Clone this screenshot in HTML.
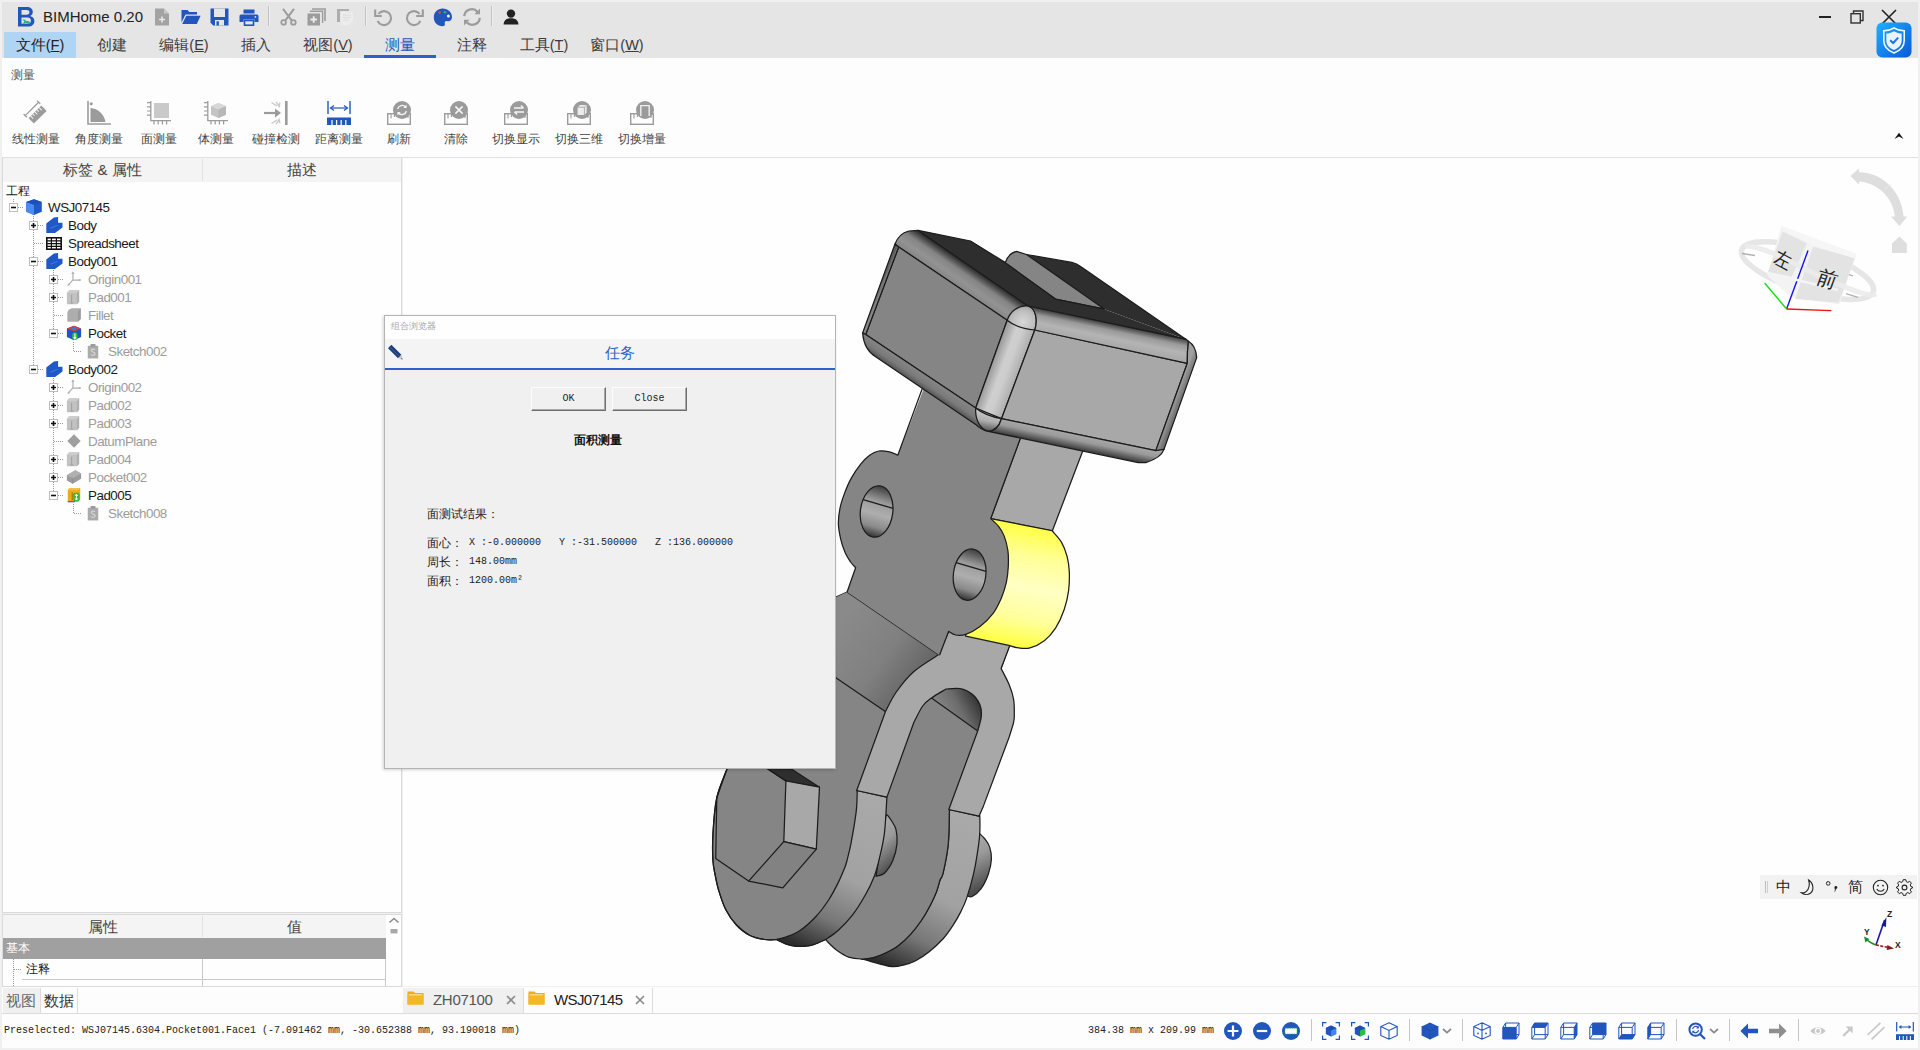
<!DOCTYPE html>
<html lang="zh">
<head>
<meta charset="utf-8">
<title>BIMHome 0.20</title>
<style>
*{box-sizing:border-box;margin:0;padding:0}
html,body{width:1920px;height:1050px;overflow:hidden;background:#f0f0f0;font-family:"Liberation Sans",sans-serif;color:#1a1a1a}
.abs{position:absolute}
svg{display:block;overflow:visible}
#titlebar{left:2px;top:2px;width:1916px;height:56px;background:#e5e5e5}
#apptitle{left:43px;top:8px;font-size:15px;line-height:18px;color:#222;white-space:nowrap}
.menu{top:32px;height:26px;line-height:26px;font-size:14.5px;color:#3a3a3a;text-align:center;white-space:nowrap}
#ribbon{left:2px;top:58px;width:1916px;height:100px;background:#fdfdfd;border-bottom:1px solid #e0e0e0}
.rlabel{top:131px;font-size:12px;line-height:16px;color:#444;white-space:nowrap;text-align:center;width:70px}
#leftpanel{left:2px;top:158px;width:400px;height:755px;background:#fefefe;border:1px solid #dadada;border-top:none}
#lphead{left:3px;top:158px;width:398px;height:24px;background:#f4f4f4}
.hdr{font-size:15px;color:#444;text-align:center;line-height:24px;height:24px;white-space:nowrap}
.tree{font-size:13.4px;letter-spacing:-0.5px;white-space:nowrap;line-height:18px;height:18px;color:#1a1a1a}
.g{color:#9c9c9c}
#view3d{left:403px;top:158px;width:1515px;height:828px;background:#fefefe}
#proppanel{left:2px;top:914px;width:400px;height:73px;background:#fefefe;border:1px solid #dadada}
#tabbar{left:2px;top:987px;width:1916px;height:27px;background:#fdfdfd;border-bottom:1px solid #dcdcdc}
#statusbar{left:2px;top:1014px;width:1916px;height:34px;background:#fdfdfd}
.mono{font-family:"Liberation Mono",monospace}
</style>
</head>
<body>
<!-- ===== title bar ===== -->
<div class="abs" id="titlebar"></div>
<svg class="abs" style="left:18px;top:7px" width="17" height="20" viewBox="0 0 17 20">
  <path d="M0 0 H9 C13.5 0 14.8 2.8 14.8 4.8 C14.8 7 13.7 8.4 12.1 9 C14.8 9.6 16.4 11.4 16.4 14 C16.4 17.4 14 19.6 10 19.6 H0 Z M3.5 2.9 V7.7 H8.6 C10.6 7.7 11.4 6.6 11.4 5.2 C11.4 3.8 10.6 2.9 8.6 2.9 Z M3.5 10.5 V16.7 H9.6 C12 16.7 12.9 15.4 12.9 13.7 C12.9 12 12 10.5 9.6 10.5 Z" fill="#2156bd" fill-rule="evenodd"/>
  <path d="M4.6 13 c1.2 -0.8 2.6 -0.4 3.2 0.8 l3.4 0.4 l1 1.6 l-1.4 1 l-3.6 -0.6 c-0.8 0.8 -2.2 0.8 -3 -0.2 l1.8 -0.4 l0.2 -1.4 z" fill="#2fae8c"/>
</svg>
<div class="abs" id="apptitle">BIMHome 0.20</div>

<!-- new doc -->
<svg class="abs" style="left:154px;top:8px" width="16" height="18" viewBox="0 0 16 18"><path d="M1 0.5 H10 L15 5.5 V17.5 H1 Z" fill="#a3a3a3"/><path d="M10 0.5 V5.5 H15 Z" fill="#c9c9c9"/><path d="M8 8.5 V14.5 M5 11.5 H11" stroke="#e8e8e8" stroke-width="1.6"/></svg>
<!-- open -->
<svg class="abs" style="left:181px;top:9px" width="20" height="16" viewBox="0 0 20 16"><path d="M0.5 1 H6.5 L8.3 3 H16 V5.5 H4.5 L0.5 13.5 Z" fill="#2156bd"/><path d="M5.3 6.8 H19.6 L15.8 15 H1.2 Z" fill="#2156bd"/></svg>
<!-- save -->
<svg class="abs" style="left:210px;top:8px" width="19" height="18" viewBox="0 0 19 18"><path d="M0.5 0.5 H18.5 V17.5 H3.2 L0.5 14.8 Z" fill="#2156bd"/><rect x="4" y="0.5" width="11" height="8.5" fill="#e5e5e5"/><rect x="5" y="12" width="9" height="5.5" fill="#e5e5e5"/><rect x="6.5" y="13.3" width="2.4" height="4.2" fill="#2156bd"/></svg>
<!-- print -->
<svg class="abs" style="left:239px;top:9px" width="20" height="17" viewBox="0 0 20 17"><rect x="4.5" y="0.5" width="11" height="4" fill="#2156bd"/><path d="M2 5.5 H18 Q19.5 5.5 19.5 7 V13 H15.5 V10.5 H4.5 V13 H0.5 V7 Q0.5 5.5 2 5.5 Z" fill="#2156bd"/><rect x="5.5" y="11.5" width="9" height="4.7" fill="none" stroke="#2156bd" stroke-width="1.6"/><circle cx="16.4" cy="7.9" r="0.9" fill="#e5e5e5"/></svg>
<div class="abs" style="left:268px;top:6px;width:2px;height:20px;background:linear-gradient(90deg,#c2c2c2 50%,#efefef 50%)"></div>
<!-- cut -->
<svg class="abs" style="left:280px;top:8px" width="17" height="18" viewBox="0 0 17 18"><path d="M3 0.8 L11.8 12.6 M14 0.8 L5.2 12.6" stroke="#9c9c9c" stroke-width="2" fill="none"/><circle cx="3.6" cy="14.4" r="2.3" fill="none" stroke="#9c9c9c" stroke-width="1.8"/><circle cx="13.4" cy="14.4" r="2.3" fill="none" stroke="#9c9c9c" stroke-width="1.8"/></svg>
<!-- copy -->
<svg class="abs" style="left:307px;top:8px" width="19" height="18" viewBox="0 0 19 18"><path d="M5 1 H18 V13" fill="none" stroke="#9c9c9c" stroke-width="1.6"/><path d="M3 3.2 H15.6 V15" fill="none" stroke="#9c9c9c" stroke-width="1.4"/><rect x="0.5" y="5.5" width="12.5" height="12" fill="#9c9c9c"/><path d="M6.7 8.2 V14.8 M3.4 11.5 H10" stroke="#ededed" stroke-width="1.8"/></svg>
<!-- paste -->
<svg class="abs" style="left:336px;top:8px" width="19" height="18" viewBox="0 0 19 18"><path d="M1 1 H13 V3 H4 V14 H1 Z" fill="#aeaeae"/><path d="M5 4 H17 V13 L13 17 H5 Z" fill="#ececec"/><path d="M7 7 H15 M7 9.5 H15 M7 12 H13" stroke="#dcdcdc" stroke-width="1"/></svg>
<div class="abs" style="left:365px;top:6px;width:2px;height:20px;background:linear-gradient(90deg,#c2c2c2 50%,#efefef 50%)"></div>
<!-- undo -->
<svg class="abs" style="left:374px;top:8px" width="20" height="18" viewBox="0 0 20 18"><path d="M4.4 6 A7 7 0 1 1 3.6 12.8" fill="none" stroke="#9c9c9c" stroke-width="2.1"/><path d="M1.2 1.4 V8 H7.8" fill="none" stroke="#9c9c9c" stroke-width="2.1"/></svg>
<!-- redo -->
<svg class="abs" style="left:404px;top:8px" width="20" height="18" viewBox="0 0 20 18"><path d="M15.6 6 A7 7 0 1 0 16.4 12.8" fill="none" stroke="#9c9c9c" stroke-width="2.1"/><path d="M18.8 1.4 V8 H12.2" fill="none" stroke="#9c9c9c" stroke-width="2.1"/></svg>
<!-- palette -->
<svg class="abs" style="left:433px;top:8px" width="20" height="19" viewBox="0 0 20 19"><path d="M9.6 0.6 C15 0.6 19 4.4 19 9 C19 12.4 16.6 13.6 14.4 13.2 C12.4 12.8 11.4 13.8 11.8 15.4 C12.2 17.2 11.4 18.2 9.6 18.2 C4.6 18.2 0.8 14.2 0.8 9.4 C0.8 4.4 4.6 0.6 9.6 0.6 Z" fill="#2156bd"/><circle cx="6.6" cy="4.6" r="1.3" fill="#d84a3a"/><circle cx="12" cy="4.2" r="1.3" fill="#3cb44b"/><circle cx="15.4" cy="8" r="1.5" fill="#f2f2f2"/></svg>
<!-- refresh -->
<svg class="abs" style="left:462px;top:8px" width="20" height="18" viewBox="0 0 20 18"><path d="M2.2 8.2 A7.6 7.6 0 0 1 15.6 4" fill="none" stroke="#9c9c9c" stroke-width="2.2"/><path d="M17.8 9.8 A7.6 7.6 0 0 1 4.4 14" fill="none" stroke="#9c9c9c" stroke-width="2.2"/><path d="M18 0.6 V6.2 H12.4 Z" fill="#9c9c9c"/><path d="M2 17.4 V11.8 H7.6 Z" fill="#9c9c9c"/></svg>
<div class="abs" style="left:491px;top:6px;width:2px;height:20px;background:linear-gradient(90deg,#c2c2c2 50%,#efefef 50%)"></div>
<!-- user -->
<svg class="abs" style="left:503px;top:9px" width="16" height="16" viewBox="0 0 16 16"><circle cx="8" cy="4.6" r="4.2" fill="#222"/><path d="M0.6 15.6 C0.6 11.2 3.6 9.2 8 9.2 C12.4 9.2 15.4 11.2 15.4 15.6 Z" fill="#222"/></svg>

<!-- window controls -->
<div class="abs" style="left:1819px;top:16px;width:12px;height:2px;background:#222"></div>
<svg class="abs" style="left:1850px;top:10px" width="14" height="14" viewBox="0 0 14 14"><path d="M3.5 3.5 V1 H13 V10.5 H10.5" fill="none" stroke="#333" stroke-width="1.4"/><rect x="1" y="3.7" width="9.3" height="9.3" fill="none" stroke="#333" stroke-width="1.4"/></svg>
<svg class="abs" style="left:1881px;top:9px" width="16" height="16" viewBox="0 0 16 16"><path d="M1 1 L15 15 M15 1 L1 15" stroke="#222" stroke-width="1.6"/></svg>
<!-- shield badge -->
<svg class="abs" style="left:1876px;top:21.5px" width="36" height="36" viewBox="0 0 37 37">
  <defs><linearGradient id="shg" x1="0" y1="0" x2="1" y2="1"><stop offset="0" stop-color="#1fb0ff"/><stop offset="1" stop-color="#0a58d8"/></linearGradient></defs>
  <rect x="0.5" y="0.5" width="36" height="36" rx="6" fill="url(#shg)"/>
  <path d="M18.5 6 C22 8.4 25.6 9 29 9 V19 C29 25.4 24.4 29.6 18.5 31.8 C12.6 29.6 8 25.4 8 19 V9 C11.4 9 15 8.4 18.5 6 Z" fill="none" stroke="#f2f8ff" stroke-width="1.6"/>
  <path d="M18.5 9.4 C21.4 11.2 24 11.6 26.4 11.8 V19 C26.4 23.8 22.8 27.2 18.5 28.8 C14.2 27.2 10.6 23.8 10.6 19 V11.8 C13 11.6 15.6 11.2 18.5 9.4 Z" fill="#e9f3ff"/>
  <path d="M14.6 18.8 L17.6 21.6 L22.8 16" fill="none" stroke="#1a72e8" stroke-width="2"/>
</svg>

<!-- ===== menu bar ===== -->
<div class="abs menu" style="left:4px;width:72px;background:#b0d4f3;color:#222">文件(<u>F</u>)</div>
<div class="abs menu" style="left:76px;width:72px">创建</div>
<div class="abs menu" style="left:148px;width:72px">编辑(<u>E</u>)</div>
<div class="abs menu" style="left:220px;width:72px">插入</div>
<div class="abs menu" style="left:292px;width:72px">视图(<u>V</u>)</div>
<div class="abs menu" style="left:364px;width:72px;color:#2156bd">测量</div>
<div class="abs" style="left:364px;top:55px;width:72px;height:3px;background:#2a62c8"></div>
<div class="abs menu" style="left:436px;width:72px">注释</div>
<div class="abs menu" style="left:508px;width:72px">工具(<u>T</u>)</div>
<div class="abs menu" style="left:581px;width:72px">窗口(<u>W</u>)</div>
<!-- ===== ribbon ===== -->
<div class="abs" id="ribbon"></div>
<div class="abs" style="left:11px;top:67px;font-size:12px;color:#555;line-height:16px">测量</div>

<!-- 线性测量 -->
<svg class="abs" style="left:24px;top:101px" width="24" height="24" viewBox="0 0 24 24"><g transform="rotate(-45 12 12)"><path d="M2.5 4 V8.5 M21.5 4 V8.5 M2.5 6.2 H21.5" stroke="#9b9b9b" stroke-width="1.3" fill="none"/><rect x="3" y="10.5" width="18" height="7.5" fill="#9b9b9b"/><path d="M6 10.5 V14 M9 10.5 V13 M12 10.5 V14 M15 10.5 V13 M18 10.5 V14" stroke="#f4f4f4" stroke-width="1"/></g></svg>
<!-- 角度测量 -->
<svg class="abs" style="left:87px;top:101px" width="24" height="24" viewBox="0 0 24 24"><path d="M1 0 V23 H24" fill="none" stroke="#9b9b9b" stroke-width="1.6"/><path d="M3.5 21 V7 C11 7.5 17 13 18.5 21 Z" fill="#9b9b9b"/><circle cx="4.2" cy="2.8" r="1.5" fill="#9b9b9b"/></svg>
<!-- 面测量 -->
<svg class="abs" style="left:147px;top:101px" width="24" height="24" viewBox="0 0 24 24"><path d="M3.8 0 V19.6 H24" fill="none" stroke="#9b9b9b" stroke-width="1.3"/><path d="M0 1.6 H3.8 M0 5.8 H3.8 M0 10 H3.8 M0 14.2 H3.8 M7 19.6 V23.4 M11.2 19.6 V23.4 M15.4 19.6 V23.4 M19.6 19.6 V23.4" stroke="#9b9b9b" stroke-width="1.2"/><rect x="7" y="2" width="15" height="15" fill="#c9c9c9"/></svg>
<!-- 体测量 -->
<svg class="abs" style="left:204px;top:101px" width="24" height="24" viewBox="0 0 24 24"><path d="M3.8 0 V19.6 H24" fill="none" stroke="#9b9b9b" stroke-width="1.3"/><path d="M0 1.6 H3.8 M0 5.8 H3.8 M0 10 H3.8 M0 14.2 H3.8 M7 19.6 V23.4 M11.2 19.6 V23.4 M15.4 19.6 V23.4 M19.6 19.6 V23.4" stroke="#9b9b9b" stroke-width="1.2"/><path d="M14.5 2 L22 5.2 V13.8 L14.5 17 L7 13.8 V5.2 Z" fill="#c4c4c4"/><path d="M14.5 2 L22 5.2 L14.5 8.6 L7 5.2 Z" fill="#d8d8d8"/><path d="M14.5 8.6 L22 5.2 V13.8 L14.5 17 Z" fill="#b8b8b8"/></svg>
<!-- 碰撞检测 -->
<svg class="abs" style="left:264px;top:101px" width="24" height="24" viewBox="0 0 24 24"><rect x="21" y="0" width="2.6" height="24" fill="#9b9b9b"/><path d="M0 12 H13" stroke="#9b9b9b" stroke-width="2.2"/><path d="M11 7.5 L17 12 L11 16.5 Z" fill="#9b9b9b"/><path d="M7.5 1.5 L13 5 M12 0.8 L15 5 M15.8 1.5 L15.2 6.5 M7.5 22.5 L13 19 M12 23.2 L15 19 M15.8 22.5 L15.2 17.5" stroke="#c9c9c9" stroke-width="1.4"/></svg>
<!-- 距离测量 -->
<svg class="abs" style="left:327px;top:101px" width="24" height="24" viewBox="0 0 24 24"><path d="M1 0 V13 M23 0 V13" stroke="#2156bd" stroke-width="1.4"/><path d="M4 7 H20" stroke="#2156bd" stroke-width="1.2"/><path d="M7 4.4 L3.4 7 L7 9.6 M17 4.4 L20.6 7 L17 9.6" fill="none" stroke="#2156bd" stroke-width="1.2"/><rect x="0" y="16.5" width="24" height="7.5" fill="#2156bd"/><path d="M5 19 V24 M9.6 19 V24 M14.2 19 V24 M18.8 19 V24" stroke="#f6f6f6" stroke-width="1.3"/></svg>
<!-- ruler+badge icons -->
<svg class="abs" style="left:387px;top:101px" width="24" height="24" viewBox="0 0 24 24"><rect x="0.7" y="12.7" width="22.6" height="10.6" fill="none" stroke="#9b9b9b" stroke-width="1.4"/><path d="M4 13 V17.5 M7.4 13 V16 M18.4 13 V16 M21 13 V17" stroke="#9b9b9b" stroke-width="1.1"/><circle cx="15" cy="9" r="9" fill="#9b9b9b"/><path d="M10.6 8 A4.6 4.6 0 0 1 18.6 6 M19.4 10 A4.6 4.6 0 0 1 11.4 12" fill="none" stroke="#f6f6f6" stroke-width="1.3"/><path d="M19.6 3.6 V7 H16.2 Z M10.4 14.4 V11 H13.8 Z" fill="#f6f6f6"/></svg>
<svg class="abs" style="left:444px;top:101px" width="24" height="24" viewBox="0 0 24 24"><rect x="0.7" y="12.7" width="22.6" height="10.6" fill="none" stroke="#9b9b9b" stroke-width="1.4"/><path d="M4 13 V17.5 M7.4 13 V16 M18.4 13 V16 M21 13 V17" stroke="#9b9b9b" stroke-width="1.1"/><circle cx="15" cy="9" r="9" fill="#9b9b9b"/><path d="M11.4 5.4 L18.6 12.6 M18.6 5.4 L11.4 12.6" stroke="#f6f6f6" stroke-width="1.5"/></svg>
<svg class="abs" style="left:504px;top:101px" width="24" height="24" viewBox="0 0 24 24"><rect x="0.7" y="12.7" width="22.6" height="10.6" fill="none" stroke="#9b9b9b" stroke-width="1.4"/><path d="M4 13 V17.5 M7.4 13 V16 M18.4 13 V16 M21 13 V17" stroke="#9b9b9b" stroke-width="1.1"/><circle cx="15" cy="9" r="9" fill="#9b9b9b"/><path d="M10 7 H19.4 M16.8 4.4 L19.6 7 M20 11 H10.6 M13.2 13.6 L10.4 11" fill="none" stroke="#f6f6f6" stroke-width="1.3"/></svg>
<svg class="abs" style="left:567px;top:101px" width="24" height="24" viewBox="0 0 24 24"><rect x="0.7" y="12.7" width="22.6" height="10.6" fill="none" stroke="#9b9b9b" stroke-width="1.4"/><path d="M4 13 V17.5 M7.4 13 V16 M18.4 13 V16 M21 13 V17" stroke="#9b9b9b" stroke-width="1.1"/><circle cx="15" cy="9" r="9" fill="#9b9b9b"/><path d="M10.6 6.2 L13 4 H19.6 V11.4 L17.4 14 H10.6 Z" fill="#ededed"/><path d="M10.6 6.2 H17.4 V14 M17.4 6.2 L19.6 4" fill="none" stroke="#9b9b9b" stroke-width="0.8"/></svg>
<svg class="abs" style="left:630px;top:101px" width="24" height="24" viewBox="0 0 24 24"><rect x="0.7" y="12.7" width="22.6" height="10.6" fill="none" stroke="#9b9b9b" stroke-width="1.4"/><path d="M4 13 V17.5 M7.4 13 V16 M18.4 13 V16 M21 13 V17" stroke="#9b9b9b" stroke-width="1.1"/><circle cx="15" cy="9" r="9" fill="#9b9b9b"/><path d="M10.8 15 V4.6 H19.2 V15" fill="none" stroke="#f0f0f0" stroke-width="1.4"/></svg>

<div class="abs rlabel" style="left:1px">线性测量</div>
<div class="abs rlabel" style="left:64px">角度测量</div>
<div class="abs rlabel" style="left:124px">面测量</div>
<div class="abs rlabel" style="left:181px">体测量</div>
<div class="abs rlabel" style="left:241px">碰撞检测</div>
<div class="abs rlabel" style="left:304px">距离测量</div>
<div class="abs rlabel" style="left:364px">刷新</div>
<div class="abs rlabel" style="left:421px">清除</div>
<div class="abs rlabel" style="left:481px">切换显示</div>
<div class="abs rlabel" style="left:544px">切换三维</div>
<div class="abs rlabel" style="left:607px">切换增量</div>
<!-- collapse caret -->
<svg class="abs" style="left:1894px;top:132px" width="10" height="8" viewBox="0 0 10 8"><path d="M0.5 7 L5 0.8 L9.5 7 L5 4.6 Z" fill="#111"/></svg>
<!-- ===== left panel ===== -->
<div class="abs" id="leftpanel"></div>
<div class="abs" id="lphead"></div>
<div class="abs" style="left:202px;top:159px;width:1px;height:22px;background:#e2e2e2"></div>
<div class="abs hdr" style="left:3px;top:158px;width:199px">标签 &amp; 属性</div>
<div class="abs hdr" style="left:203px;top:158px;width:198px">描述</div>
<div class="abs tree" style="left:6px;top:182px;font-size:12px;letter-spacing:0">工程</div>

<svg class="abs" style="left:0;top:0" width="402" height="560" viewBox="0 0 402 560">
<path d="M13.5 199 L13.5 203" stroke="#9a9a9a" stroke-width="1" stroke-dasharray="1 1" fill="none"/>
<path d="M18 207.5 L24 207.5" stroke="#9a9a9a" stroke-width="1" stroke-dasharray="1 1" fill="none"/>
<path d="M33.5 216 L33.5 369" stroke="#9a9a9a" stroke-width="1" stroke-dasharray="1 1" fill="none"/>
<path d="M38 225.5 L44 225.5" stroke="#9a9a9a" stroke-width="1" stroke-dasharray="1 1" fill="none"/>
<path d="M34 243.5 L44 243.5" stroke="#9a9a9a" stroke-width="1" stroke-dasharray="1 1" fill="none"/>
<path d="M38 261.5 L44 261.5" stroke="#9a9a9a" stroke-width="1" stroke-dasharray="1 1" fill="none"/>
<path d="M38 369.5 L44 369.5" stroke="#9a9a9a" stroke-width="1" stroke-dasharray="1 1" fill="none"/>
<path d="M53.5 270 L53.5 333" stroke="#9a9a9a" stroke-width="1" stroke-dasharray="1 1" fill="none"/>
<path d="M58 279.5 L64 279.5" stroke="#9a9a9a" stroke-width="1" stroke-dasharray="1 1" fill="none"/>
<path d="M58 297.5 L64 297.5" stroke="#9a9a9a" stroke-width="1" stroke-dasharray="1 1" fill="none"/>
<path d="M54 315.5 L64 315.5" stroke="#9a9a9a" stroke-width="1" stroke-dasharray="1 1" fill="none"/>
<path d="M58 333.5 L64 333.5" stroke="#9a9a9a" stroke-width="1" stroke-dasharray="1 1" fill="none"/>
<path d="M53.5 378 L53.5 495" stroke="#9a9a9a" stroke-width="1" stroke-dasharray="1 1" fill="none"/>
<path d="M58 387.5 L64 387.5" stroke="#9a9a9a" stroke-width="1" stroke-dasharray="1 1" fill="none"/>
<path d="M58 405.5 L64 405.5" stroke="#9a9a9a" stroke-width="1" stroke-dasharray="1 1" fill="none"/>
<path d="M58 423.5 L64 423.5" stroke="#9a9a9a" stroke-width="1" stroke-dasharray="1 1" fill="none"/>
<path d="M54 441.5 L64 441.5" stroke="#9a9a9a" stroke-width="1" stroke-dasharray="1 1" fill="none"/>
<path d="M58 459.5 L64 459.5" stroke="#9a9a9a" stroke-width="1" stroke-dasharray="1 1" fill="none"/>
<path d="M58 477.5 L64 477.5" stroke="#9a9a9a" stroke-width="1" stroke-dasharray="1 1" fill="none"/>
<path d="M58 495.5 L64 495.5" stroke="#9a9a9a" stroke-width="1" stroke-dasharray="1 1" fill="none"/>
<path d="M73.5 342 L73.5 351" stroke="#9a9a9a" stroke-width="1" stroke-dasharray="1 1" fill="none"/>
<path d="M74 351.5 L82 351.5" stroke="#9a9a9a" stroke-width="1" stroke-dasharray="1 1" fill="none"/>
<path d="M73.5 504 L73.5 513" stroke="#9a9a9a" stroke-width="1" stroke-dasharray="1 1" fill="none"/>
<path d="M74 513.5 L82 513.5" stroke="#9a9a9a" stroke-width="1" stroke-dasharray="1 1" fill="none"/>
</svg>
<svg class="abs" style="left:8.5px;top:203px" width="9" height="9" viewBox="0 0 9 9"><rect x="0.5" y="0.5" width="8" height="8" fill="#fff" stroke="#bcbcbc"/><path d="M2 4.5 H7" stroke="#111" stroke-width="1.6"/></svg>
<svg class="abs" style="left:26px;top:199px" width="16" height="16" viewBox="0 0 16 16"><path d="M8 0.2 L15.8 3 V12.8 L8 15.9 L0.2 12.8 V3 Z" fill="#2058c6"/><path d="M0.2 3 L8 5.8 V15.9 L0.2 12.8 Z" fill="#4a8cf6"/><path d="M8 0.2 L15.8 3 L8 5.8 L0.2 3 Z" fill="#1d50b8"/></svg>
<div class="abs tree" style="left:48px;top:199px">WSJ07145</div>
<svg class="abs" style="left:28.5px;top:221px" width="9" height="9" viewBox="0 0 9 9"><rect x="0.5" y="0.5" width="8" height="8" fill="#fff" stroke="#bcbcbc"/><path d="M2 4.5 H7 M4.5 2 V7" stroke="#111" stroke-width="1.6"/></svg>
<svg class="abs" style="left:46px;top:217px" width="17" height="16" viewBox="0 0 16.4 16"><path d="M0 16 V6.5 L7.6 0.5 L11.8 0 V5.8 H16.2 V10.5 L8.7 16 Z" fill="#2058c8"/><path d="M3.6 11 L10.4 8.2 L11.8 8.6 L5 11.4 Z" fill="#3f7fe8"/></svg>
<div class="abs tree" style="left:68px;top:217px">Body</div>
<svg class="abs" style="left:46px;top:237px" width="16" height="13" viewBox="0 0 16 13"><rect x="0.8" y="0.8" width="14.4" height="11.4" fill="#fff" stroke="#111" stroke-width="1.6"/><path d="M1 3.9 H15 M1 6.6 H15 M1 9.3 H15 M5.4 1 V12 M10.4 1 V12" stroke="#111" stroke-width="1.2"/></svg>
<div class="abs tree" style="left:68px;top:235px">Spreadsheet</div>
<svg class="abs" style="left:28.5px;top:257px" width="9" height="9" viewBox="0 0 9 9"><rect x="0.5" y="0.5" width="8" height="8" fill="#fff" stroke="#bcbcbc"/><path d="M2 4.5 H7" stroke="#111" stroke-width="1.6"/></svg>
<svg class="abs" style="left:46px;top:253px" width="17" height="16" viewBox="0 0 16.4 16"><path d="M0 16 V6.5 L7.6 0.5 L11.8 0 V5.8 H16.2 V10.5 L8.7 16 Z" fill="#2058c8"/><path d="M3.6 11 L10.4 8.2 L11.8 8.6 L5 11.4 Z" fill="#3f7fe8"/></svg>
<div class="abs tree" style="left:68px;top:253px">Body001</div>
<svg class="abs" style="left:48.5px;top:275px" width="9" height="9" viewBox="0 0 9 9"><rect x="0.5" y="0.5" width="8" height="8" fill="#fff" stroke="#bcbcbc"/><path d="M2 4.5 H7 M4.5 2 V7" stroke="#111" stroke-width="1.6"/></svg>
<svg class="abs" style="left:66px;top:270px" width="16" height="18" viewBox="0 0 18 18"><path d="M7.8 2 V10 L2.6 15.8 M7.8 10 L16.4 10.2" fill="none" stroke="#adadad" stroke-width="1.3"/><path d="M7.8 0.4 L6 3.4 H9.6 Z M17.4 10.2 L14.6 8.8 V11.6 Z M1.6 16.8 L2.4 13.8 L4.6 15.8 Z" fill="#b4b4b4"/></svg>
<div class="abs tree g" style="left:88px;top:271px">Origin001</div>
<svg class="abs" style="left:48.5px;top:293px" width="9" height="9" viewBox="0 0 9 9"><rect x="0.5" y="0.5" width="8" height="8" fill="#fff" stroke="#bcbcbc"/><path d="M2 4.5 H7 M4.5 2 V7" stroke="#111" stroke-width="1.6"/></svg>
<svg class="abs" style="left:66px;top:289px" width="14" height="16" viewBox="0 0 16 18"><path d="M1 4.4 L3.6 1.4 H15 V14.4 L12.4 17.4 H1 Z" fill="#c2c2c2"/><path d="M12.4 4.4 L15 1.4 V14.4 L12.4 17.4 Z" fill="#b0b0b0"/><path d="M1 4.4 L3.6 1.4 H15 L12.4 4.4 Z" fill="#cdcdcd"/><path d="M6.4 6.4 V15.6 M4.4 15.8 H8.6" stroke="#a2a2a2" stroke-width="1.2"/></svg>
<div class="abs tree g" style="left:88px;top:289px">Pad001</div>
<svg class="abs" style="left:66px;top:306px" width="16" height="18" viewBox="0 0 18 18"><path d="M1.5 8 C1.5 3 4.5 1.5 9 1.5 H16.5 V13.5 L13.5 16.5 H1.5 Z" fill="#adadad"/><path d="M13.5 5 V16.5 L16.5 13.5 V1.5 Z" fill="#9a9a9a"/></svg>
<div class="abs tree g" style="left:88px;top:307px">Fillet</div>
<svg class="abs" style="left:48.5px;top:329px" width="9" height="9" viewBox="0 0 9 9"><rect x="0.5" y="0.5" width="8" height="8" fill="#fff" stroke="#bcbcbc"/><path d="M2 4.5 H7" stroke="#111" stroke-width="1.6"/></svg>
<svg class="abs" style="left:66px;top:324px" width="16" height="18" viewBox="0 0 18 18"><path d="M9 0.8 L17 4 V13.6 L9 17.2 L1 13.6 V4 Z" fill="#1f55c8"/><path d="M9 0.8 L17 4 L9 7.4 L1 4 Z" fill="#c8453c"/><path d="M6 4 L9 2.6 L12 4 L9 5.4 Z" fill="#3a7ae0"/><rect x="7" y="8.4" width="6" height="8.4" rx="2.6" fill="#27c22d"/><path d="M10 9.6 V15.4 M8.6 13.6 L10 15.6 L11.4 13.6" stroke="#fff" stroke-width="1.2" fill="none"/></svg>
<div class="abs tree" style="left:88px;top:325px">Pocket</div>
<svg class="abs" style="left:86px;top:343px" width="14" height="16" viewBox="0 0 16 18"><rect x="2" y="3" width="12" height="14.5" fill="#ababab"/><rect x="5.2" y="1" width="5.6" height="3.4" fill="#9c9c9c"/><path d="M10.2 7.6 C9.6 6.6 6 6.4 6 8.4 C6 10.4 10.4 9.8 10.4 12.2 C10.4 14.4 6.4 14.2 5.6 13" fill="none" stroke="#d8d8d8" stroke-width="1.3"/></svg>
<div class="abs tree g" style="left:108px;top:343px">Sketch002</div>
<svg class="abs" style="left:28.5px;top:365px" width="9" height="9" viewBox="0 0 9 9"><rect x="0.5" y="0.5" width="8" height="8" fill="#fff" stroke="#bcbcbc"/><path d="M2 4.5 H7" stroke="#111" stroke-width="1.6"/></svg>
<svg class="abs" style="left:46px;top:361px" width="17" height="16" viewBox="0 0 16.4 16"><path d="M0 16 V6.5 L7.6 0.5 L11.8 0 V5.8 H16.2 V10.5 L8.7 16 Z" fill="#2058c8"/><path d="M3.6 11 L10.4 8.2 L11.8 8.6 L5 11.4 Z" fill="#3f7fe8"/></svg>
<div class="abs tree" style="left:68px;top:361px">Body002</div>
<svg class="abs" style="left:48.5px;top:383px" width="9" height="9" viewBox="0 0 9 9"><rect x="0.5" y="0.5" width="8" height="8" fill="#fff" stroke="#bcbcbc"/><path d="M2 4.5 H7 M4.5 2 V7" stroke="#111" stroke-width="1.6"/></svg>
<svg class="abs" style="left:66px;top:378px" width="16" height="18" viewBox="0 0 18 18"><path d="M7.8 2 V10 L2.6 15.8 M7.8 10 L16.4 10.2" fill="none" stroke="#adadad" stroke-width="1.3"/><path d="M7.8 0.4 L6 3.4 H9.6 Z M17.4 10.2 L14.6 8.8 V11.6 Z M1.6 16.8 L2.4 13.8 L4.6 15.8 Z" fill="#b4b4b4"/></svg>
<div class="abs tree g" style="left:88px;top:379px">Origin002</div>
<svg class="abs" style="left:48.5px;top:401px" width="9" height="9" viewBox="0 0 9 9"><rect x="0.5" y="0.5" width="8" height="8" fill="#fff" stroke="#bcbcbc"/><path d="M2 4.5 H7 M4.5 2 V7" stroke="#111" stroke-width="1.6"/></svg>
<svg class="abs" style="left:66px;top:397px" width="14" height="16" viewBox="0 0 16 18"><path d="M1 4.4 L3.6 1.4 H15 V14.4 L12.4 17.4 H1 Z" fill="#c2c2c2"/><path d="M12.4 4.4 L15 1.4 V14.4 L12.4 17.4 Z" fill="#b0b0b0"/><path d="M1 4.4 L3.6 1.4 H15 L12.4 4.4 Z" fill="#cdcdcd"/><path d="M6.4 6.4 V15.6 M4.4 15.8 H8.6" stroke="#a2a2a2" stroke-width="1.2"/></svg>
<div class="abs tree g" style="left:88px;top:397px">Pad002</div>
<svg class="abs" style="left:48.5px;top:419px" width="9" height="9" viewBox="0 0 9 9"><rect x="0.5" y="0.5" width="8" height="8" fill="#fff" stroke="#bcbcbc"/><path d="M2 4.5 H7 M4.5 2 V7" stroke="#111" stroke-width="1.6"/></svg>
<svg class="abs" style="left:66px;top:415px" width="14" height="16" viewBox="0 0 16 18"><path d="M1 4.4 L3.6 1.4 H15 V14.4 L12.4 17.4 H1 Z" fill="#c2c2c2"/><path d="M12.4 4.4 L15 1.4 V14.4 L12.4 17.4 Z" fill="#b0b0b0"/><path d="M1 4.4 L3.6 1.4 H15 L12.4 4.4 Z" fill="#cdcdcd"/><path d="M6.4 6.4 V15.6 M4.4 15.8 H8.6" stroke="#a2a2a2" stroke-width="1.2"/></svg>
<div class="abs tree g" style="left:88px;top:415px">Pad003</div>
<svg class="abs" style="left:66px;top:432px" width="16" height="18" viewBox="0 0 18 18"><path d="M9 1.5 L16.5 9 L9 16.5 L1.5 9 Z" fill="#9f9f9f"/></svg>
<div class="abs tree g" style="left:88px;top:433px">DatumPlane</div>
<svg class="abs" style="left:48.5px;top:455px" width="9" height="9" viewBox="0 0 9 9"><rect x="0.5" y="0.5" width="8" height="8" fill="#fff" stroke="#bcbcbc"/><path d="M2 4.5 H7 M4.5 2 V7" stroke="#111" stroke-width="1.6"/></svg>
<svg class="abs" style="left:66px;top:451px" width="14" height="16" viewBox="0 0 16 18"><path d="M1 4.4 L3.6 1.4 H15 V14.4 L12.4 17.4 H1 Z" fill="#c2c2c2"/><path d="M12.4 4.4 L15 1.4 V14.4 L12.4 17.4 Z" fill="#b0b0b0"/><path d="M1 4.4 L3.6 1.4 H15 L12.4 4.4 Z" fill="#cdcdcd"/><path d="M6.4 6.4 V15.6 M4.4 15.8 H8.6" stroke="#a2a2a2" stroke-width="1.2"/></svg>
<div class="abs tree g" style="left:88px;top:451px">Pad004</div>
<svg class="abs" style="left:48.5px;top:473px" width="9" height="9" viewBox="0 0 9 9"><rect x="0.5" y="0.5" width="8" height="8" fill="#fff" stroke="#bcbcbc"/><path d="M2 4.5 H7 M4.5 2 V7" stroke="#111" stroke-width="1.6"/></svg>
<svg class="abs" style="left:66px;top:468px" width="16" height="18" viewBox="0 0 18 18"><path d="M1 7 L10.5 1.5 L17 5 V11 L7.5 16.5 L1 13 Z" fill="#9b9b9b"/><path d="M1 7 L10.5 1.5 L17 5 L7.5 10.5 Z" fill="#b0b0b0"/><path d="M7.5 10.5 V16.5" stroke="#8a8a8a" stroke-width="0.8"/></svg>
<div class="abs tree g" style="left:88px;top:469px">Pocket002</div>
<svg class="abs" style="left:48.5px;top:491px" width="9" height="9" viewBox="0 0 9 9"><rect x="0.5" y="0.5" width="8" height="8" fill="#fff" stroke="#bcbcbc"/><path d="M2 4.5 H7" stroke="#111" stroke-width="1.6"/></svg>
<svg class="abs" style="left:66px;top:486px" width="16" height="18" viewBox="0 0 18 18"><path d="M2 3.5 L4 1 H16 V14 L14 16.5 H2 Z" fill="#f0a81c"/><path d="M2 3.5 L4 1 H16 L14 3.5 Z" fill="#f7c040"/><path d="M2 16.6 H10" stroke="#1f55c8" stroke-width="1.2"/><path d="M7 6 V15" stroke="#8a6410" stroke-width="1"/><rect x="8" y="6.6" width="7.4" height="9.6" rx="2.8" fill="#27c22d"/><path d="M11.7 8.2 V14.4 M10.2 10 L11.7 8 L13.2 10 M10.2 12.8 L11.7 14.8 L13.2 12.8" stroke="#fff" stroke-width="1.1" fill="none"/></svg>
<div class="abs tree" style="left:88px;top:487px">Pad005</div>
<svg class="abs" style="left:86px;top:505px" width="14" height="16" viewBox="0 0 16 18"><rect x="2" y="3" width="12" height="14.5" fill="#ababab"/><rect x="5.2" y="1" width="5.6" height="3.4" fill="#9c9c9c"/><path d="M10.2 7.6 C9.6 6.6 6 6.4 6 8.4 C6 10.4 10.4 9.8 10.4 12.2 C10.4 14.4 6.4 14.2 5.6 13" fill="none" stroke="#d8d8d8" stroke-width="1.3"/></svg>
<div class="abs tree g" style="left:108px;top:505px">Sketch008</div>
<!-- ===== property panel ===== -->
<div class="abs" id="proppanel"></div>
<div class="abs" style="left:3px;top:915px;width:383px;height:23px;background:#f4f4f4"></div>
<div class="abs" style="left:202px;top:916px;width:1px;height:21px;background:#e2e2e2"></div>
<div class="abs hdr" style="left:3px;top:915px;width:199px;height:23px;line-height:23px">属性</div>
<div class="abs hdr" style="left:203px;top:915px;width:183px;height:23px;line-height:23px">值</div>
<div class="abs" style="left:3px;top:938px;width:383px;height:21px;background:#a0a0a0"></div>
<div class="abs" style="left:6px;top:940px;font-size:12px;line-height:16px;color:#fff">基本</div>
<div class="abs" style="left:22px;top:979px;width:363px;height:1px;background:#c8c8c8"></div>
<div class="abs" style="left:202px;top:959px;width:1px;height:27px;background:#c8c8c8"></div>
<div class="abs" style="left:385px;top:959px;width:1px;height:27px;background:#c8c8c8"></div>
<svg class="abs" style="left:12px;top:959px" width="14" height="27" viewBox="0 0 14 27"><path d="M1.5 0 V27 M2 10.5 H9" stroke="#9a9a9a" stroke-width="1" stroke-dasharray="1 1" fill="none"/></svg>
<div class="abs" style="left:26px;top:961px;font-size:12px;line-height:16px;color:#222">注释</div>
<!-- scroll column -->
<svg class="abs" style="left:388px;top:916px" width="12" height="20" viewBox="0 0 12 20"><path d="M1.5 6.5 L6 2.5 L10.5 6.5" fill="none" stroke="#8c8c8c" stroke-width="1.6"/><rect x="2.5" y="13" width="7" height="4.4" fill="#a8a8a8"/></svg>

<!-- ===== tab bar ===== -->
<div class="abs" id="tabbar"></div>
<div class="abs" style="left:3px;top:988px;width:37px;height:25px;background:#f0f0f0"></div>
<div class="abs" style="left:6px;top:991px;font-size:15px;line-height:19px;color:#666">视图</div>
<div class="abs" style="left:40px;top:988px;width:38px;height:25px;background:#fdfdfd;border-left:1px solid #dcdcdc;border-right:1px solid #dcdcdc"></div>
<div class="abs" style="left:44px;top:991px;font-size:15px;line-height:19px;color:#333">数据</div>

<div class="abs" style="left:403px;top:988px;width:121px;height:25px;background:#f0f0f0;border-right:1px solid #dcdcdc"></div>
<svg class="abs" style="left:407px;top:991px" width="17" height="14" viewBox="0 0 17 14"><path d="M0.5 0.5 H6.5 L8 2 H16.5 V13.5 H0.5 Z" fill="#f6a91b"/><path d="M0.5 3.2 H16.5 V13.5 H0.5 Z" fill="#f2b827"/><path d="M2 3.8 H15" stroke="#fde9a8" stroke-width="1"/></svg>
<div class="abs" style="left:433px;top:991px;font-size:15px;line-height:18px;color:#555;letter-spacing:-0.3px">ZH07100</div>
<svg class="abs" style="left:506px;top:995px" width="10" height="10" viewBox="0 0 10 10"><path d="M1 1 L9 9 M9 1 L1 9" stroke="#8a8a8a" stroke-width="1.7"/></svg>
<svg class="abs" style="left:528px;top:991px" width="17" height="14" viewBox="0 0 17 14"><path d="M0.5 0.5 H6.5 L8 2 H16.5 V13.5 H0.5 Z" fill="#f6a91b"/><path d="M0.5 3.2 H16.5 V13.5 H0.5 Z" fill="#f2b827"/><path d="M2 3.8 H15" stroke="#fde9a8" stroke-width="1"/></svg>
<div class="abs" style="left:554px;top:991px;font-size:15px;line-height:18px;color:#222;letter-spacing:-0.6px">WSJ07145</div>
<svg class="abs" style="left:635px;top:995px" width="10" height="10" viewBox="0 0 10 10"><path d="M1 1 L9 9 M9 1 L1 9" stroke="#8a8a8a" stroke-width="1.7"/></svg>
<div class="abs" style="left:652px;top:988px;width:1px;height:25px;background:#dcdcdc"></div>

<!-- ===== status bar ===== -->
<div class="abs" id="statusbar"></div>
<div class="abs mono" style="left:4px;top:1024px;font-size:10px;line-height:14px;color:#222;white-space:pre;transform:scaleY(1.14);transform-origin:0 50%">Preselected: WSJ07145.6304.Pocket001.Face1 (-7.091462 mm, -30.652388 mm, 93.190018 mm)</div>
<div class="abs mono" style="left:1088px;top:1024px;font-size:10px;line-height:14px;color:#222;white-space:pre;transform:scaleY(1.14);transform-origin:0 50%">384.38 mm x 209.99 mm</div>
<!-- ===== 3D view ===== -->
<div class="abs" id="view3d"></div>
<svg class="abs" style="left:0;top:0" width="1920" height="1050" viewBox="0 0 1920 1050">
<defs>
<linearGradient id="gLT" gradientUnits="userSpaceOnUse" x1="950" y1="282" x2="963.8" y2="261.8"><stop offset="0" stop-color="#858585"/><stop offset="0.3" stop-color="#939393"/><stop offset="0.62" stop-color="#858585"/><stop offset="0.92" stop-color="#3a3a3a"/><stop offset="1" stop-color="#2e2e2e"/></linearGradient>
<linearGradient id="gFT" gradientUnits="userSpaceOnUse" x1="1110" y1="346.5" x2="1115" y2="322.5"><stop offset="0" stop-color="#a8a8a8"/><stop offset="0.35" stop-color="#b4b4b4"/><stop offset="0.65" stop-color="#9a9a9a"/><stop offset="0.93" stop-color="#3c3c3c"/><stop offset="1" stop-color="#2e2e2e"/></linearGradient>
<linearGradient id="gLB" gradientUnits="userSpaceOnUse" x1="920" y1="371" x2="910.5" y2="385"><stop offset="0" stop-color="#868686"/><stop offset="0.45" stop-color="#7a7a7a"/><stop offset="1" stop-color="#3a3a3a"/></linearGradient>
<linearGradient id="gFB" gradientUnits="userSpaceOnUse" x1="1080" y1="435" x2="1077" y2="449.5"><stop offset="0" stop-color="#a8a8a8"/><stop offset="0.4" stop-color="#9a9a9a"/><stop offset="1" stop-color="#3c3c3c"/></linearGradient>
<linearGradient id="gVF" gradientUnits="userSpaceOnUse" x1="991" y1="364" x2="1018" y2="374"><stop offset="0" stop-color="#969696"/><stop offset="0.4" stop-color="#cfcfcf"/><stop offset="0.6" stop-color="#cdcdcd"/><stop offset="1" stop-color="#aeaeae"/></linearGradient>
<radialGradient id="gTC" gradientUnits="userSpaceOnUse" cx="1023" cy="322" r="20"><stop offset="0" stop-color="#d8d8d8"/><stop offset="0.6" stop-color="#bcbcbc"/><stop offset="1" stop-color="#8c8c8c"/></radialGradient>
<linearGradient id="gBC" gradientUnits="userSpaceOnUse" x1="990" y1="410" x2="986" y2="432"><stop offset="0" stop-color="#cccccc"/><stop offset="0.5" stop-color="#b0b0b0"/><stop offset="1" stop-color="#4a4a4a"/></linearGradient>
<linearGradient id="gRF" gradientUnits="userSpaceOnUse" x1="1172" y1="405" x2="1181" y2="408.5"><stop offset="0" stop-color="#a0a0a0"/><stop offset="1" stop-color="#5a5a5a"/></linearGradient>
<linearGradient id="gLF" gradientUnits="userSpaceOnUse" x1="882" y1="290" x2="878.5" y2="288.5"><stop offset="0" stop-color="#8a8a8a"/><stop offset="1" stop-color="#5c5c5c"/></linearGradient>
<linearGradient id="gY" gradientUnits="userSpaceOnUse" x1="1032" y1="524" x2="1008" y2="648"><stop offset="0" stop-color="#ffff3c"/><stop offset="0.25" stop-color="#ffff96"/><stop offset="0.5" stop-color="#ffffc4"/><stop offset="0.75" stop-color="#ffff9c"/><stop offset="1" stop-color="#ffff38"/></linearGradient>
<linearGradient id="gH" x1="0.55" y1="0" x2="0.45" y2="1"><stop offset="0" stop-color="#3c3c3c"/><stop offset="0.3" stop-color="#9a9a9a"/><stop offset="0.55" stop-color="#aeaeae"/><stop offset="0.8" stop-color="#8a8a8a"/><stop offset="1" stop-color="#303030"/></linearGradient>
<linearGradient id="gR1" gradientUnits="userSpaceOnUse" x1="872" y1="800" x2="805" y2="948"><stop offset="0" stop-color="#a9a9a9"/><stop offset="0.5" stop-color="#a2a2a2"/><stop offset="0.78" stop-color="#777"/><stop offset="1" stop-color="#2c2c2c"/></linearGradient>
<linearGradient id="gR2" gradientUnits="userSpaceOnUse" x1="965" y1="818" x2="893" y2="968"><stop offset="0" stop-color="#a9a9a9"/><stop offset="0.5" stop-color="#a2a2a2"/><stop offset="0.78" stop-color="#777"/><stop offset="1" stop-color="#2c2c2c"/></linearGradient>
<linearGradient id="gU" gradientUnits="userSpaceOnUse" x1="938" y1="712" x2="975" y2="692"><stop offset="0" stop-color="#888"/><stop offset="0.5" stop-color="#6c6c6c"/><stop offset="1" stop-color="#303030"/></linearGradient>
<linearGradient id="gB1" gradientUnits="userSpaceOnUse" x1="850" y1="610" x2="925" y2="665"><stop offset="0" stop-color="#8a8a8a"/><stop offset="0.6" stop-color="#808080"/><stop offset="1" stop-color="#686868"/></linearGradient>
<linearGradient id="gP" x1="0" y1="0" x2="0.3" y2="1"><stop offset="0" stop-color="#b4b4b4"/><stop offset="0.5" stop-color="#9a9a9a"/><stop offset="1" stop-color="#4c4c4c"/></linearGradient>
</defs>
<path d="M979.5 833.5 C980.3 834.3 982.8 836.3 984.5 838.5 C986.2 840.7 988.5 843.4 989.6 846.9 C990.8 850.4 991.6 854.8 991.4 859.3 C991.2 863.8 990.0 869.2 988.3 874.2 C986.5 879.2 983.6 885.3 980.9 889.0 C978.2 892.7 974.5 895.4 972.2 896.5 C969.9 897.6 968.1 896.0 967.3 895.9 L955 890 L968 832 Z" fill="url(#gP)" stroke="#1c1c1c" stroke-width="1.25" stroke-linejoin="round"/>
<path d="M979.1 816.1 C979.2 816.2 979.7 813.5 979.8 816.6 C979.9 819.7 980.1 828.2 979.7 834.5 C979.3 840.8 978.2 847.7 977.2 854.3 C976.2 860.9 975.2 866.9 973.5 874.2 C971.8 881.5 968.8 891.9 966.7 898.1 C964.6 904.3 963.2 907.0 961.0 911.4 C958.8 915.8 956.3 920.2 953.3 924.8 C950.3 929.4 946.9 934.6 942.9 939.0 C938.9 943.4 934.1 947.7 929.5 951.4 C924.9 955.1 919.6 958.7 915.2 961.0 C910.8 963.3 906.7 964.2 902.9 965.2 C899.1 966.2 896.0 966.9 892.4 966.7 C888.8 966.6 885.5 965.4 881.0 964.3 C876.5 963.2 869.0 960.9 865.7 960.0 C862.4 959.1 861.8 959.2 861.0 959.0 L861.0 959.0 C863.0 958.8 869.3 958.6 873.3 957.6 C877.3 956.6 880.7 955.3 884.8 953.3 C888.9 951.3 893.8 948.9 898.1 945.7 C902.4 942.5 906.7 938.4 910.5 934.3 C914.3 930.2 917.8 925.6 921.0 921.0 C924.2 916.4 927.0 911.5 929.5 906.7 C932.0 901.9 934.5 896.9 936.2 892.4 C938.0 887.9 938.9 883.2 940.0 880.0 C941.1 876.8 941.7 879.2 943.1 873.2 C944.5 867.2 947.2 854.3 948.3 843.8 C949.3 833.3 949.2 815.9 949.4 810.3 L948.8 809.5 Z" fill="url(#gR2)" stroke="#1c1c1c" stroke-width="1.25" stroke-linejoin="round"/>
<path d="M830 597.4 L835.4 597.4 L847.1 592 L939.5 655.2 L948.3 631.9 L1009 646.5 L1001 668.5 L985 760 L949.4 810.3 C949.2 815.9 949.3 833.3 948.3 843.8 C947.2 854.3 944.5 867.2 943.1 873.2 C941.7 879.2 941.1 876.8 940.0 880.0 C938.9 883.2 938.0 887.9 936.2 892.4 C934.5 896.9 932.0 901.9 929.5 906.7 C927.0 911.5 924.2 916.4 921.0 921.0 C917.8 925.6 914.3 930.2 910.5 934.3 C906.7 938.4 902.4 942.5 898.1 945.7 C893.8 948.9 888.9 951.3 884.8 953.3 C880.7 955.3 877.3 956.6 873.3 957.6 C869.3 958.6 865.1 959.1 861.0 959.0 C856.9 958.9 852.6 958.5 848.6 957.1 C844.6 955.7 840.3 952.7 837.1 950.5 C833.9 948.3 831.4 945.6 829.5 943.8 C827.6 942.0 826.3 940.2 825.7 939.5 L825.7 939.5 C823.8 940.3 817.8 943.2 814.3 944.3 C810.8 945.4 808.0 945.9 804.8 946.2 C801.6 946.5 798.4 946.6 795.2 946.2 C792.0 945.8 788.9 944.9 785.7 943.8 C782.5 942.7 777.8 940.2 776.2 939.5 L776.2 939.5 C774.3 939.5 769.2 940.2 764.8 939.5 C760.3 938.8 754.3 937.7 749.5 935.2 C744.7 932.8 740.2 929.1 736.2 924.8 C732.2 920.5 728.6 915.1 725.7 909.5 C722.8 903.9 720.8 897.1 719.0 891.4 C717.2 885.7 716.2 880.4 715.2 875.2 C714.2 870.0 713.3 867.0 712.9 860.0 C712.5 853.0 712.4 843.7 713.0 833.3 C713.6 822.9 714.4 808.5 716.8 797.7 C719.2 786.9 725.5 773.3 727.2 768.4 L830 768 Z" fill="#858585" stroke="#1c1c1c" stroke-width="1.25" stroke-linejoin="round"/>
<path d="M830 600 L835.4 597.4 L847.1 592 L939.5 655.2 C934.6 657.4 921.0 665.3 913.9 671.5 C906.8 677.7 901.1 685.2 896.3 692.0 C891.5 698.8 887.1 708.7 885.3 712.0 L834.8 677.1 L830 677 Z" fill="url(#gB1)"/>
<path d="M847.1 592 L939.5 655.2 M834.8 677.1 L885.3 711.6" fill="none" stroke="#1c1c1c" stroke-width="1.25" stroke-linejoin="round"/>
<path d="M887.5 815.0 C888.1 815.8 889.6 817.6 891.0 820.0 C892.4 822.4 894.9 825.2 895.9 829.2 C896.9 833.2 897.5 838.6 897.0 843.8 C896.5 849.0 894.9 855.7 892.8 860.6 C890.7 865.5 887.2 870.6 884.4 873.2 C881.6 875.8 877.4 875.8 876.0 876.3 L880 850 L886 815 Z" fill="url(#gP)" stroke="#1c1c1c" stroke-width="1.25" stroke-linejoin="round"/>
<path d="M856.7 790.5 C856.8 790.6 857.3 787.8 857.2 791.4 C857.1 795.0 857.2 803.7 856.1 812.4 C855.0 821.1 852.4 835.9 850.9 843.8 C849.4 851.7 848.1 856.0 847.1 860.0 C846.1 864.0 846.3 863.8 844.8 867.6 C843.3 871.4 840.8 877.5 838.1 882.9 C835.4 888.3 832.2 894.5 828.6 900.0 C825.0 905.5 821.0 911.1 816.2 916.2 C811.4 921.3 805.1 927.0 800.0 930.5 C794.9 934.0 789.7 935.6 785.7 937.1 C781.7 938.6 777.8 939.1 776.2 939.5 L776.2 939.5 C777.8 940.2 782.5 942.7 785.7 943.8 C788.9 944.9 792.0 945.8 795.2 946.2 C798.4 946.6 801.6 946.5 804.8 946.2 C808.0 945.9 810.8 945.4 814.3 944.3 C817.8 943.2 823.8 940.3 825.7 939.5 L825.7 939.5 C827.8 938.0 833.7 934.5 838.1 930.5 C842.5 926.5 847.8 921.2 852.4 915.2 C857.0 909.2 862.1 900.8 865.7 894.3 C869.4 887.8 872.1 881.9 874.3 876.2 C876.5 870.5 877.3 867.1 879.0 860.0 C880.7 852.9 883.1 843.8 884.4 833.3 C885.7 822.8 886.5 803.1 886.9 797.1 L886.9 797.1 Z" fill="url(#gR1)" stroke="#1c1c1c" stroke-width="1.25" stroke-linejoin="round"/>
<path d="M727.2 768.4 C725.5 773.3 719.2 786.9 716.8 797.7 C714.4 808.5 713.6 822.9 713.0 833.3 C712.4 843.7 712.5 853.0 712.9 860.0 C713.3 867.0 714.2 870.0 715.2 875.2 C716.2 880.4 717.2 885.7 719.0 891.4 C720.8 897.1 722.8 903.9 725.7 909.5 C728.6 915.1 732.2 920.5 736.2 924.8 C740.2 929.1 744.7 932.8 749.5 935.2 C754.3 937.7 760.3 938.8 764.8 939.5 C769.2 940.2 774.3 939.5 776.2 939.5" fill="none" stroke="#1c1c1c" stroke-width="1.25" stroke-linejoin="round"/>
<polygon points="767.1,768.4 785.9,781.0 819.5,787.2 792.2,769.4" fill="#2e2e2e" stroke="#1c1c1c" stroke-width="1.25" stroke-linejoin="round"/>
<polygon points="785.9,781.0 819.5,787.2 816.3,849.1 783.8,841.7" fill="#a8a8a8" stroke="#1c1c1c" stroke-width="1.25" stroke-linejoin="round"/>
<polygon points="783.8,841.7 816.3,849.1 782.8,887.8 748.6,881.1" fill="#828282" stroke="#1c1c1c" stroke-width="1.25" stroke-linejoin="round"/>
<polyline points="727.2,768.4 716.8,797.7 715.7,858.5 748.6,881.1" fill="none" stroke="#1c1c1c" stroke-width="1.25" stroke-linejoin="round"/>
<polyline points="767.1,768.4 785.9,781.0" fill="none" stroke="#1c1c1c" stroke-width="1.25" stroke-linejoin="round"/>
<path d="M931.5 698 L977.7 731 C978.3 728.6 980.9 720.8 981.3 716.4 C981.7 712.0 981.4 708.4 979.9 704.7 C978.4 701.0 975.3 696.7 972.0 694.0 C968.7 691.3 964.3 689.3 960.0 688.5 C955.7 687.7 948.3 688.9 946.0 689.0 Z" fill="url(#gU)"/>
<path d="M931.5 698 L977.7 731" fill="none" stroke="#1c1c1c" stroke-width="1.25" stroke-linejoin="round"/>
<path d="M948.6 631.4 L956 612 L1016 626 L1009.6 646 L1001.1 668.5 C1002.5 671.2 1007.1 679.6 1009.2 684.7 C1011.3 689.8 1012.8 694.4 1013.6 699.3 C1014.5 704.2 1014.3 710.2 1014.3 714.0 C1014.3 717.8 1014.5 718.5 1013.6 722.3 C1012.8 726.1 1009.9 734.5 1009.2 737.0 L983.5 805.9 L979.1 816.1 L948.8 809.5 L977.7 731 C978.3 728.6 980.9 720.8 981.3 716.4 C981.7 712.0 981.4 708.4 979.9 704.7 C978.4 701.0 975.3 696.7 972.0 694.0 C968.7 691.3 964.3 689.3 960.0 688.5 C955.7 687.7 948.3 688.9 946.0 689.0 C943.6 690.5 935.4 695.2 931.5 698.0 C927.6 700.8 925.6 702.0 922.7 706.0 C919.8 710.0 915.4 719.6 913.9 722.3 L886.9 797.1 L856.7 790.5 L885.3 712 C887.1 708.7 891.5 698.8 896.3 692.0 C901.1 685.2 906.8 677.7 913.9 671.5 C921.0 665.3 934.6 657.4 938.8 654.6 Z" fill="#a8a8a8" stroke="#1c1c1c" stroke-width="1.25" stroke-linejoin="round"/>
<polygon points="1023.1,430.8 1085.4,444.0 1052.3,531.0 990.7,518.6" fill="#a8a8a8" stroke="#1c1c1c" stroke-width="1.25" stroke-linejoin="round"/>
<path d="M990.7 518.6 L1052.1 530.7 C1053.6 532.6 1058.9 537.8 1061.4 542.1 C1063.9 546.4 1065.8 551.4 1067.1 556.4 C1068.4 561.4 1069.0 566.4 1069.3 572.1 C1069.5 577.8 1069.4 584.5 1068.6 590.7 C1067.8 596.9 1066.4 603.1 1064.3 609.3 C1062.2 615.5 1059.0 622.7 1055.7 627.9 C1052.4 633.1 1048.6 637.4 1044.3 640.7 C1040.0 644.0 1034.3 646.7 1030.0 647.9 C1025.7 649.1 1021.9 648.3 1018.6 647.9 C1015.3 647.5 1011.4 646.1 1010.0 645.7 L965.7 636.2 L969.6 574 Z" fill="url(#gY)" stroke="#1c1c1c" stroke-width="1.25" stroke-linejoin="round"/>
<path d="M935 360 L897.8 455.2 C896.4 454.6 892.7 452.6 889.5 451.9 C886.3 451.2 882.1 450.4 878.8 451.0 C875.5 451.6 872.6 453.0 869.6 455.2 C866.6 457.4 863.5 460.6 860.5 464.4 C857.5 468.2 854.0 473.3 851.3 478.1 C848.6 482.9 846.4 488.3 844.5 493.4 C842.6 498.5 840.9 503.5 839.9 508.6 C838.9 513.7 838.3 518.7 838.4 523.8 C838.5 528.9 839.6 534.3 840.7 539.1 C841.8 543.9 843.6 549.0 845.2 552.8 C846.9 556.6 848.9 559.5 850.6 562.0 C852.3 564.5 854.8 566.8 855.6 567.7 L847.1 592 L939.5 655.2 L948.6 631.4 C949.8 632.0 952.9 634.5 955.7 635.0 C958.6 635.5 961.7 635.7 965.7 634.3 C969.8 632.9 975.5 629.8 980.0 626.4 C984.5 623.0 989.3 618.4 992.9 613.6 C996.5 608.9 999.1 603.1 1001.4 597.9 C1003.6 592.6 1005.2 587.4 1006.4 582.1 C1007.5 576.9 1008.0 571.6 1008.3 566.4 C1008.5 561.2 1008.6 555.7 1007.9 550.7 C1007.2 545.7 1005.8 540.5 1004.3 536.4 C1002.8 532.3 1000.9 529.4 998.6 526.4 C996.3 523.4 992.0 519.9 990.7 518.6 L1020.2 438.8 L1040 385 Z" fill="#858585"/>
<path d="M922.3 388.5 L897.8 455.2 C896.4 454.6 892.7 452.6 889.5 451.9 C886.3 451.2 882.1 450.4 878.8 451.0 C875.5 451.6 872.6 453.0 869.6 455.2 C866.6 457.4 863.5 460.6 860.5 464.4 C857.5 468.2 854.0 473.3 851.3 478.1 C848.6 482.9 846.4 488.3 844.5 493.4 C842.6 498.5 840.9 503.5 839.9 508.6 C838.9 513.7 838.3 518.7 838.4 523.8 C838.5 528.9 839.6 534.3 840.7 539.1 C841.8 543.9 843.6 549.0 845.2 552.8 C846.9 556.6 848.9 559.5 850.6 562.0 C852.3 564.5 854.8 566.8 855.6 567.7 L847.1 592" fill="none" stroke="#1c1c1c" stroke-width="1.25" stroke-linejoin="round"/>
<path d="M1020.2 438.8 L990.7 518.6 C992.0 519.9 996.3 523.4 998.6 526.4 C1000.9 529.4 1002.8 532.3 1004.3 536.4 C1005.8 540.5 1007.2 545.7 1007.9 550.7 C1008.6 555.7 1008.5 561.2 1008.3 566.4 C1008.0 571.6 1007.5 576.9 1006.4 582.1 C1005.2 587.4 1003.6 592.6 1001.4 597.9 C999.1 603.1 996.5 608.9 992.9 613.6 C989.3 618.4 984.5 623.0 980.0 626.4 C975.5 629.8 969.8 632.9 965.7 634.3 C961.7 635.7 958.6 635.5 955.7 635.0 C952.9 634.5 949.8 632.0 948.6 631.4 L939.5 655.2" fill="none" stroke="#1c1c1c" stroke-width="1.25" stroke-linejoin="round"/>
<ellipse cx="876.6" cy="511.5" rx="16.2" ry="25.8" transform="rotate(7.5 876.6 511.5)" fill="url(#gH)" stroke="#1c1c1c" stroke-width="1.25" stroke-linejoin="round"/>
<path d="M863.1 499.6 L893.0 508.3" fill="none" stroke="#1c1c1c" stroke-width="1.25" stroke-linejoin="round"/>
<ellipse cx="969.6" cy="574.6" rx="16.2" ry="25.8" transform="rotate(7.5 969.6 574.6)" fill="url(#gH)" stroke="#1c1c1c" stroke-width="1.25" stroke-linejoin="round"/>
<path d="M956.1 562.7 L986.0 571.4" fill="none" stroke="#1c1c1c" stroke-width="1.25" stroke-linejoin="round"/>
<path d="M1005 263.3 Q1008.5 253 1016.5 251.4 L1026.5 254.5 L1071.8 262.4 Q1077 263.6 1080.6 266.5 L1186.2 339.4 L1104.5 309.2 L1055.4 299.1 Z" fill="#2e2e2e"/>
<path d="M1026.5 254.5 L1071.8 262.4 Q1077 263.6 1080.6 266.5 L1186.2 339.4" fill="none" stroke="#1c1c1c" stroke-width="1.25" stroke-linejoin="round"/>
<path d="M1005 263.3 Q1008.5 253 1016.5 251.4 L1026.5 254.5 L1104.5 309.2 L1055.4 299.1 Z" fill="#858585" stroke="#1c1c1c" stroke-width="1.25" stroke-linejoin="round"/>
<path d="M918 230.3 L970.5 241 L1005 262.4 L1055.4 299.1 L1104.5 309.2 L1186.2 339.4 L1027.8 306 L923 234 Z" fill="#2e2e2e"/>
<path d="M918 230.3 L970.5 241 L1005 262.4 L1055.4 299.1 L1104.5 309.2 M1186.2 339.4 L1027.8 306 L923 234" fill="none" stroke="#1c1c1c" stroke-width="1.25" stroke-linejoin="round"/>
<path d="M895 244 Q899 233.5 908.7 231 L918 230.3 L923 234 L1027.8 306 L1007.2 320.3 L898.7 247 Z" fill="url(#gLT)" stroke="#1c1c1c" stroke-width="1.25" stroke-linejoin="round"/>
<polygon points="898.7,247.0 1007.2,320.3 975.7,408.0 865.7,334.5" fill="#858585" stroke="#1c1c1c" stroke-width="1.25" stroke-linejoin="round"/>
<path d="M895 244 L898.7 247 L865.7 334.5 L862.6 333 Z" fill="url(#gLF)" stroke="#1c1c1c" stroke-width="1.25" stroke-linejoin="round"/>
<path d="M862.6 333 L865.7 334.5 L975.7 408 Q977 422 988.3 431.3 Q981 430 975.7 424.4 L876 357 Q864 350 862.6 333 Z" fill="url(#gLB)" stroke="#1c1c1c" stroke-width="1.25" stroke-linejoin="round"/>
<polygon points="1007.2,320.3 1034.8,330.0 1001.5,418.7 975.7,408.0" fill="url(#gVF)" stroke="#1c1c1c" stroke-width="1.25" stroke-linejoin="round"/>
<path d="M1007.2 320.3 C1010 311 1019 305 1027.8 306 C1036 308 1038 320 1034.8 330 C1024 329 1014 326 1007.2 320.3 Z" fill="url(#gTC)" stroke="#1c1c1c" stroke-width="1.25" stroke-linejoin="round"/>
<path d="M975.7 408 C983 414 992 417 1001.5 418.7 C999 427 994 431 988.3 431.3 C979 429 975 418 975.7 408 Z" fill="url(#gBC)" stroke="#1c1c1c" stroke-width="1.25" stroke-linejoin="round"/>
<polygon points="1034.8,330.0 1187.3,363.3 1155.8,450.6 1001.5,418.7" fill="#a8a8a8" stroke="#1c1c1c" stroke-width="1.25" stroke-linejoin="round"/>
<path d="M1027.8 306 L1186.2 339.4 L1188.5 341.3 Q1187 352 1187.3 363.3 L1034.8 330 C1038 320 1036 308 1027.8 306 Z" fill="url(#gFT)" stroke="#1c1c1c" stroke-width="1.25" stroke-linejoin="round"/>
<path d="M1188.5 341.3 Q1196 346 1196.7 357.6 L1164 449.4 Q1160 451 1155.8 450.6 L1187.3 363.3 Q1187 352 1188.5 341.3 Z" fill="url(#gRF)" stroke="#1c1c1c" stroke-width="1.25" stroke-linejoin="round"/>
<path d="M1001.5 418.7 L1155.8 450.6 L1164 449.4 Q1161 458 1145.8 462.6 L1138.2 462.6 L988.3 431.3 C994 431 999 427 1001.5 418.7 Z" fill="url(#gFB)" stroke="#1c1c1c" stroke-width="1.25" stroke-linejoin="round"/>
</svg>
<!-- ===== task dialog ===== -->
<div class="abs" style="left:384px;top:315px;width:452px;height:454px;background:#f0f0f0;border:1px solid #b4b4b4;box-shadow:-1px 1px 3px rgba(0,0,0,0.18)"></div>
<div class="abs" style="left:385px;top:316px;width:450px;height:23px;background:#fefefe"></div>
<div class="abs" style="left:391px;top:320px;font-size:9px;line-height:12px;color:#a8a8a8;white-space:nowrap">组合浏览器</div>
<div class="abs" style="left:385px;top:339px;width:450px;height:29px;background:#f4f4f4"></div>
<div class="abs" style="left:385px;top:368px;width:450px;height:2px;background:#2a62c8"></div>
<div class="abs" style="left:560px;top:343px;width:120px;text-align:center;font-size:15px;line-height:20px;color:#2a62c8">任务</div>
<svg class="abs" style="left:387px;top:344px" width="17" height="17" viewBox="0 0 17 17"><path d="M1 4.2 L4.4 0.8 L14.4 10.8 L11 14.2 Z" fill="#1f3f7a"/><path d="M11 14.2 L14.4 10.8 L16 15.8 Z" fill="#c9c9c9"/><path d="M14.6 14.2 L15.8 15.4 L14.2 15" fill="#222"/><path d="M2.6 2.8 L12.6 12.6" stroke="#3b64b0" stroke-width="0.8"/></svg>
<!-- buttons -->
<div class="abs" style="left:531px;top:387px;width:75px;height:24px;background:#f0f0f0;border-top:1px solid #fcfcfc;border-left:1px solid #fcfcfc;border-right:1px solid #6e6e6e;border-bottom:1px solid #6e6e6e;box-shadow:inset -1px -1px 0 #a8a8a8"></div>
<div class="abs mono" style="left:531px;top:392px;width:75px;text-align:center;font-size:10px;line-height:14px;color:#222;transform:scaleY(1.14);transform-origin:50% 50%">OK</div>
<div class="abs" style="left:612px;top:387px;width:75px;height:24px;background:#f0f0f0;border-top:1px solid #fcfcfc;border-left:1px solid #fcfcfc;border-right:1px solid #6e6e6e;border-bottom:1px solid #6e6e6e;box-shadow:inset -1px -1px 0 #a8a8a8"></div>
<div class="abs mono" style="left:612px;top:392px;width:75px;text-align:center;font-size:10px;line-height:14px;color:#222;transform:scaleY(1.14);transform-origin:50% 50%">Close</div>
<div class="abs" style="left:538px;top:432px;width:120px;text-align:center;font-size:12px;line-height:16px;font-weight:bold;color:#111">面积测量</div>
<div class="abs" style="left:427px;top:506px;font-size:12px;line-height:16px;color:#222;white-space:pre">面测试结果：</div>
<div class="abs" style="left:427px;top:535px;font-size:12px;line-height:16px;color:#222;white-space:pre">面心：</div>
<div class="abs mono" style="left:469px;top:536px;font-size:10px;line-height:14px;color:#222;white-space:pre;transform:scaleY(1.14);transform-origin:0 50%">X :-0.000000   Y :-31.500000   Z :136.000000</div>
<div class="abs" style="left:427px;top:554px;font-size:12px;line-height:16px;color:#222;white-space:pre">周长：</div>
<div class="abs mono" style="left:469px;top:555px;font-size:10px;line-height:14px;color:#222;white-space:pre;transform:scaleY(1.14);transform-origin:0 50%">148.00mm</div>
<div class="abs" style="left:427px;top:573px;font-size:12px;line-height:16px;color:#222;white-space:pre">面积：</div>
<div class="abs mono" style="left:469px;top:574px;font-size:10px;line-height:14px;color:#222;white-space:pre;transform:scaleY(1.14);transform-origin:0 50%">1200.00m²</div>
<!-- ===== nav cube ===== -->
<svg class="abs" style="left:1700px;top:150px" width="220" height="190" viewBox="1700 150 220 190">
  <!-- rotate arrow -->
  <path d="M1850.5 176 L1859 168.5 V172.2 C1878 172 1901 187 1903.6 216.5 L1907.4 216.5 L1899.4 226 L1891 216.5 L1894.8 216.5 C1893 196 1876 182.5 1859 181.4 V184.6 Z" fill="#dedede"/>
  <path d="M1883.6 190.6 L1891.6 183.8" stroke="#e9e9e9" stroke-width="1"/>
  <!-- home -->
  <path d="M1892 243.6 L1899.4 236.6 L1906.8 243.6 V253 H1892 Z" fill="#dedede"/>
  <!-- ring back -->
  <ellipse cx="1807.5" cy="270.6" rx="69" ry="21" transform="rotate(17.6 1807.5 270.6)" fill="none" stroke="#e6e6e6" stroke-width="5.5"/>
  <!-- cube -->
  <path d="M1781.4 226 L1856.4 254 L1839.4 304.6 L1790.6 297 L1767.2 275.4 Z" fill="#f3f3f3"/>
  <path d="M1782.6 231.6 L1806.8 243.2 L1791.6 277.6 L1767.6 273 Z" fill="#e3e3e3"/>
  <path d="M1813.2 246.8 L1854.8 258 L1838.6 302.8 L1795 299 Z" fill="#e3e3e3"/>
  <path d="M1781.4 226 L1856.4 254 L1853.6 258 L1812 245 L1784 230 Z" fill="#f6f6f6"/>
  <!-- ring front part -->
  <path d="M1745 246 C1770 247 1800 268 1830 281 C1850 289 1870 298 1876 294" fill="none" stroke="#ebebeb" stroke-width="5" opacity="0.9"/>
  <!-- ring tick marks -->
  <path d="M1742 253.5 L1755 255.5 M1849 274.6 L1853 275.8 M1846 293.6 L1858 297.4" stroke="#9a9a9a" stroke-width="1.4" opacity="0.75"/>
  <!-- axes -->
  <path d="M1786.6 309 L1808 250.6" stroke="#1212ee" stroke-width="1.4"/>
  <path d="M1786.6 309 L1764.6 283" stroke="#12e012" stroke-width="1.4"/>
  <path d="M1786.6 309 L1831.4 310.6" stroke="#f01212" stroke-width="1.4"/>
  <path d="M1767.6 273 L1793.8 278.4 M1795 279.6 L1838 290" stroke="#f4f4f4" stroke-width="2.6"/>
</svg>
<div class="abs" style="left:1773px;top:249px;font-size:19px;line-height:22px;color:#222;transform:matrix(0.8,0.42,-0.36,0.95,0,0);transform-origin:50% 50%">左</div>
<div class="abs" style="left:1817px;top:267px;font-size:21px;line-height:24px;color:#222;transform:matrix(0.94,0.26,-0.34,0.94,0,0);transform-origin:50% 50%">前</div>

<!-- ===== IME bar ===== -->
<div class="abs" style="left:1760px;top:875px;width:157px;height:24px;background:#f2f2f2"></div>
<div class="abs" style="left:1765px;top:881px;width:1px;height:12px;background:#bdbdbd"></div>
<div class="abs" style="left:1767px;top:881px;width:1px;height:12px;background:#cfcfcf"></div>
<div class="abs" style="left:1776px;top:878px;font-size:15px;line-height:18px;color:#222">中</div>
<svg class="abs" style="left:1800px;top:879px" width="16" height="17" viewBox="0 0 16 17"><path d="M8.6 1 C13 3.6 14.8 10.6 10.4 14.2 C7.4 16.4 3.6 15.6 1.4 13.8 C7 14.6 10.8 8.4 8.6 1 Z" fill="none" stroke="#222" stroke-width="1.1"/></svg>
<svg class="abs" style="left:1825px;top:880px" width="14" height="14" viewBox="0 0 14 14"><circle cx="3.2" cy="3.4" r="1.8" fill="none" stroke="#222" stroke-width="1"/><path d="M9.4 7.4 a1.5 1.5 0 1 1 1.4 1.6 c0.2 1.4 -0.6 2.6 -1.8 3.2 c1 -1 1.2 -2.2 0.4 -4.8 z" fill="#222"/></svg>
<div class="abs" style="left:1848px;top:878px;font-size:15px;line-height:18px;color:#222">简</div>
<svg class="abs" style="left:1872px;top:879px" width="17" height="17" viewBox="0 0 17 17"><circle cx="8.5" cy="8.5" r="7.2" fill="none" stroke="#222" stroke-width="1.1"/><circle cx="6" cy="6.6" r="0.9" fill="#222"/><circle cx="11" cy="6.6" r="0.9" fill="#222"/><path d="M4.8 10 C6.4 13 10.6 13 12.2 10" fill="none" stroke="#222" stroke-width="1.1"/></svg>
<svg class="abs" style="left:1896px;top:879px" width="17" height="17" viewBox="0 0 17 17"><circle cx="8.5" cy="8.5" r="2.4" fill="none" stroke="#222" stroke-width="1.1"/><path d="M7.2 1.2 H9.8 L10.3 3.2 L11.9 3.9 L13.7 2.8 L15.4 4.6 L14.3 6.4 L14.9 8 L16.4 8.4 V9.6 L14.9 10 L14.3 11.6 L15.4 13.4 L13.7 15.2 L11.9 14.1 L10.3 14.8 L9.8 16.8 H7.2 L6.7 14.8 L5.1 14.1 L3.3 15.2 L1.6 13.4 L2.7 11.6 L2.1 10 L0.6 9.6 V8.4 L2.1 8 L2.7 6.4 L1.6 4.6 L3.3 2.8 L5.1 3.9 L6.7 3.2 Z" transform="translate(0,-0.5)" fill="none" stroke="#222" stroke-width="1"/></svg>

<!-- ===== axis indicator ===== -->
<svg class="abs" style="left:1855px;top:905px" width="60" height="55" viewBox="1855 905 60 55">
  <path d="M1876 945 L1884.6 920" stroke="#1a1aa0" stroke-width="1.6"/><path d="M1886.4 917 L1881.4 925.4 L1886 927 Z" fill="#1a1aa0"/>
  <path d="M1876 945 C1871 943.6 1868.4 941.6 1866 938.6" stroke="#1f8a2a" stroke-width="1.6" fill="none"/><path d="M1864 936.6 L1865.4 942.4 L1869.4 939 Z" fill="#1f8a2a"/>
  <path d="M1876 945 L1888 947.4" stroke="#9a1c1c" stroke-width="1.6" stroke-dasharray="3 1.4"/><path d="M1894 948.6 L1887.4 945 L1886.6 950 Z" fill="#8a1a1a"/>
</svg>
<div class="abs" style="left:1887px;top:909px;font-size:8.5px;line-height:10px;font-weight:bold;color:#222">Z</div>
<div class="abs" style="left:1864px;top:927px;font-size:8.5px;line-height:10px;font-weight:bold;color:#222">Y</div>
<div class="abs" style="left:1895px;top:940px;font-size:8.5px;line-height:10px;font-weight:bold;color:#222">X</div>
<!-- ===== status bar icons ===== -->
<svg class="abs" style="left:1224px;top:1022px" width="18" height="18" viewBox="0 0 18 18"><circle cx="9" cy="9" r="9" fill="#2156bd"/><path d="M9 3.6 V14.4 M3.6 9 H14.4" stroke="#fff" stroke-width="2.2"/></svg>
<svg class="abs" style="left:1253px;top:1022px" width="18" height="18" viewBox="0 0 18 18"><circle cx="9" cy="9" r="9" fill="#2156bd"/><path d="M3.8 9 H14.2" stroke="#fff" stroke-width="2.2"/></svg>
<svg class="abs" style="left:1282px;top:1022px" width="18" height="18" viewBox="0 0 18 18"><circle cx="9" cy="9" r="9" fill="#2156bd"/><rect x="3" y="6.2" width="12" height="5.8" fill="#fff" stroke="#2ac43a" stroke-width="0.9" stroke-dasharray="1 0.8"/></svg>
<div class="abs" style="left:1311px;top:1019px;width:1px;height:22px;background:#c6c6c6"></div>
<svg class="abs" style="left:1322px;top:1022px" width="18" height="18" viewBox="0 0 18 18"><path d="M0.6 4.4 V0.6 H4.4 M13.6 0.6 H17.4 V4.4 M17.4 13.6 V17.4 H13.6 M4.4 17.4 H0.6 V13.6" fill="none" stroke="#2156bd" stroke-width="1.2"/><path d="M9 3.6 L14.2 6 V12 L9 14.6 L3.8 12 V6 Z" fill="#2156bd"/><path d="M9 8.4 L14.2 6 V12 L9 14.6 Z" fill="#3f86ee"/><path d="M9 3.6 L14.2 6 L9 8.4 L3.8 6 Z" fill="#1d4fb4"/></svg>
<svg class="abs" style="left:1351px;top:1022px" width="18" height="18" viewBox="0 0 18 18"><path d="M0.6 4.4 V0.6 H4.4 M13.6 0.6 H17.4 V4.4 M17.4 13.6 V17.4 H13.6 M4.4 17.4 H0.6 V13.6" fill="none" stroke="#2156bd" stroke-width="1.2"/><path d="M9 3.6 L14.2 6 V12 L9 14.6 L3.8 12 V6 Z" fill="#2156bd"/><path d="M9 8.4 L14.2 6 V12 L9 14.6 Z" fill="#22c53a"/><path d="M9 3.6 L14.2 6 L9 8.4 L3.8 6 Z" fill="#1d4fb4"/></svg>
<svg class="abs" style="left:1380px;top:1022px" width="18" height="18" viewBox="0 0 18 18"><path d="M9 0.8 L17.2 4.6 V13.4 L9 17.2 L0.8 13.4 V4.6 Z M0.8 4.6 L9 8.4 L17.2 4.6 M9 8.4 V17.2" fill="none" stroke="#2156bd" stroke-width="1.1"/></svg>
<div class="abs" style="left:1409px;top:1019px;width:1px;height:22px;background:#c6c6c6"></div>
<svg class="abs" style="left:1421px;top:1022px" width="18" height="18" viewBox="0 0 18 18"><path d="M9 0.6 L17.4 4.6 V13.4 L9 17.4 L0.6 13.4 V4.6 Z" fill="#2156bd"/><path d="M0.6 4.6 L9 8.6 L17.4 4.6 M9 8.6 V17.4" fill="none" stroke="#1c4cae" stroke-width="0.7"/></svg>
<svg class="abs" style="left:1442px;top:1028px" width="10" height="6" viewBox="0 0 10 6"><path d="M1 1 L5 4.6 L9 1" fill="none" stroke="#8a8a8a" stroke-width="1.7"/></svg>
<div class="abs" style="left:1462px;top:1019px;width:1px;height:22px;background:#c6c6c6"></div>
<svg class="abs" style="left:1473px;top:1022px" width="18" height="18" viewBox="0 0 18 18"><path d="M9 0.8 L17.2 4.6 V13.4 L9 17.2 L0.8 13.4 V4.6 Z M0.8 4.6 L9 8.4 L17.2 4.6 M9 0.8 V17.2" fill="none" stroke="#2156bd" stroke-width="1.1"/><circle cx="5" cy="11.4" r="0.9" fill="#2156bd"/><circle cx="13" cy="11.4" r="0.9" fill="#2156bd"/></svg>
<svg class="abs" style="left:1502px;top:1022px" width="18" height="18" viewBox="0 0 18 18"><path d="M0.8 5.4 H14.2 V17 H0.8 Z" fill="#2156bd"/><path d="M0.8 5.4 L3.6 1 H17 V12.6 L14.2 17 H0.8 Z M0.8 5.4 H14.2 V17 M14.2 5.4 L17 1 M3.6 1 V12.6 H17 M3.6 12.6 L0.8 17" fill="none" stroke="#2156bd" stroke-width="1"/></svg>
<svg class="abs" style="left:1531px;top:1022px" width="18" height="18" viewBox="0 0 18 18"><path d="M0.8 5.4 L3.6 1 H17 L14.2 5.4 Z" fill="#2156bd"/><path d="M0.8 5.4 L3.6 1 H17 V12.6 L14.2 17 H0.8 Z M0.8 5.4 H14.2 V17 M14.2 5.4 L17 1 M3.6 1 V12.6 H17 M3.6 12.6 L0.8 17" fill="none" stroke="#2156bd" stroke-width="1"/></svg>
<svg class="abs" style="left:1560px;top:1022px" width="18" height="18" viewBox="0 0 18 18"><path d="M14.2 5.4 L17 1 V12.6 L14.2 17 Z" fill="#2156bd"/><path d="M0.8 5.4 L3.6 1 H17 V12.6 L14.2 17 H0.8 Z M0.8 5.4 H14.2 V17 M14.2 5.4 L17 1 M3.6 1 V12.6 H17 M3.6 12.6 L0.8 17" fill="none" stroke="#2156bd" stroke-width="1"/></svg>
<svg class="abs" style="left:1589px;top:1022px" width="18" height="18" viewBox="0 0 18 18"><path d="M3.6 1 H17 V12.6 H3.6 Z" fill="#2156bd"/><path d="M0.8 5.4 L3.6 1 H17 V12.6 L14.2 17 H0.8 Z M0.8 5.4 H14.2 V17 M14.2 5.4 L17 1 M3.6 1 V12.6 H17 M3.6 12.6 L0.8 17" fill="none" stroke="#2156bd" stroke-width="1"/></svg>
<svg class="abs" style="left:1618px;top:1022px" width="18" height="18" viewBox="0 0 18 18"><path d="M0.8 17 L3.6 12.6 H17 L14.2 17 Z" fill="#2156bd"/><path d="M0.8 5.4 L3.6 1 H17 V12.6 L14.2 17 H0.8 Z M0.8 5.4 H14.2 V17 M14.2 5.4 L17 1 M3.6 1 V12.6 H17 M3.6 12.6 L0.8 17" fill="none" stroke="#2156bd" stroke-width="1"/></svg>
<svg class="abs" style="left:1647px;top:1022px" width="18" height="18" viewBox="0 0 18 18"><path d="M0.8 5.4 L3.6 1 V12.6 L0.8 17 Z" fill="#2156bd"/><path d="M0.8 5.4 L3.6 1 H17 V12.6 L14.2 17 H0.8 Z M0.8 5.4 H14.2 V17 M14.2 5.4 L17 1 M3.6 1 V12.6 H17 M3.6 12.6 L0.8 17" fill="none" stroke="#2156bd" stroke-width="1"/></svg>
<div class="abs" style="left:1676px;top:1019px;width:1px;height:22px;background:#c6c6c6"></div>
<svg class="abs" style="left:1688px;top:1022px" width="18" height="18" viewBox="0 0 18 18"><circle cx="7.6" cy="7.6" r="6.2" fill="none" stroke="#2156bd" stroke-width="2"/><path d="M12.2 12.2 L17 17" stroke="#2156bd" stroke-width="2.2"/><path d="M4.6 7 A3.2 3.2 0 0 1 10.2 5.6 M10.6 8.2 A3.2 3.2 0 0 1 5 9.6" fill="none" stroke="#2156bd" stroke-width="1.2"/><path d="M10.8 3.8 V6.4 H8.2 Z M4.4 11.4 V8.8 H7 Z" fill="#2156bd"/></svg>
<svg class="abs" style="left:1709px;top:1028px" width="10" height="6" viewBox="0 0 10 6"><path d="M1 1 L5 4.6 L9 1" fill="none" stroke="#8a8a8a" stroke-width="1.7"/></svg>
<div class="abs" style="left:1729px;top:1019px;width:1px;height:22px;background:#c6c6c6"></div>
<svg class="abs" style="left:1740px;top:1022px" width="18" height="18" viewBox="0 0 18 18"><path d="M0.4 9 L8 1.6 V6.8 H18 V11.2 H8 V16.4 Z" fill="#2156bd"/></svg>
<svg class="abs" style="left:1769px;top:1022px" width="18" height="18" viewBox="0 0 18 18"><path d="M17.6 9 L10 1.6 V6.8 H0 V11.2 H10 V16.4 Z" fill="#8e8e8e"/></svg>
<div class="abs" style="left:1798px;top:1019px;width:1px;height:22px;background:#c6c6c6"></div>
<svg class="abs" style="left:1810px;top:1025px" width="16" height="12" viewBox="0 0 16 12"><path d="M0.4 6 C3.6 1.4 12.4 1.4 15.6 6 C12.4 10.6 3.6 10.6 0.4 6 Z" fill="#c8c8c8"/><circle cx="8" cy="6" r="3.3" fill="#fdfdfd"/><circle cx="8" cy="6" r="1.9" fill="#c8c8c8"/></svg>
<svg class="abs" style="left:1842px;top:1026px" width="11" height="11" viewBox="0 0 11 11"><path d="M1.2 10 L8.6 2.6" stroke="#c8c8c8" stroke-width="2.2"/><path d="M3.6 0.6 H10.6 V7.6 Z" fill="#c8c8c8"/></svg>
<svg class="abs" style="left:1867px;top:1022px" width="18" height="18" viewBox="0 0 18 18"><path d="M0.6 13 L13.4 0.8 M4.6 17.4 L17.4 5.2" stroke="#c8c8c8" stroke-width="1.6"/></svg>
<svg class="abs" style="left:1896px;top:1022px" width="18" height="18" viewBox="0 0 18 18"><path d="M0.7 0 V9.6 M17.3 0 V9.6" stroke="#2156bd" stroke-width="1.2"/><path d="M3.4 5 H14.6" stroke="#2156bd" stroke-width="1"/><path d="M5.4 3 L2.8 5 L5.4 7 Z M12.6 3 L15.2 5 L12.6 7 Z" fill="#2156bd"/><rect x="0" y="12.2" width="18" height="5.8" fill="#2156bd"/><path d="M3.6 14 V18 M7.2 14 V18 M10.8 14 V18 M14.4 14 V18" stroke="#fff" stroke-width="1"/></svg>
</body>
</html>
